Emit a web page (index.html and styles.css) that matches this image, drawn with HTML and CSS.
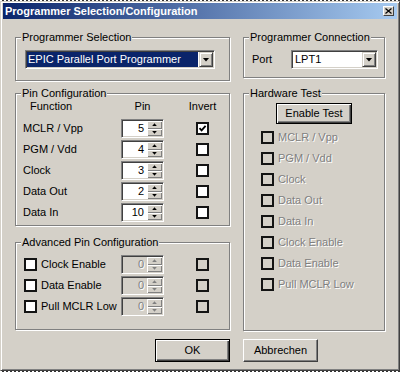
FILE: index.html
```html
<!DOCTYPE html>
<html lang="en">
<head>
    <meta charset="UTF-8">
    <title>Programmer Selection/Configuration</title>
    <link rel="stylesheet" href="styles.css">
</head>
<body>
    <div class="dialog">
        <div class="titlebar">
            <span class="title">Programmer Selection/Configuration</span>
            <span class="close">
                <svg width="7" height="6" viewBox="0 0 7 6"><path d="M0.5 0.5 L6.5 5.5 M6.5 0.5 L0.5 5.5" stroke="#000" stroke-width="1.2"/></svg>
            </span>
        </div>
        <div class="body">
            <div class="col">
                <fieldset class="group g-select">
                    <legend>Programmer Selection</legend>
                    <div class="inner select-inner">
                        <div class="combo combo-prog">
                            <span class="combo-text selected">EPIC Parallel Port Programmer</span>
                            <span class="drop"><i class="down"></i></span>
                        </div>
                    </div>
                </fieldset>
                <fieldset class="group g-pins">
                    <legend>Pin Configuration</legend>
                    <div class="pin-grid">
                        <span class="hd hd-func">Function</span>
                        <span class="hd hd-pin">Pin</span>
                        <span></span>
                        <span class="hd hd-inv">Invert</span>

                        <span>MCLR / Vpp</span>
                        <div class="spin"><span class="val">5</span><span class="ud"><b><i class="up"></i></b><b><i class="dn"></i></b></span></div>
                        <span></span>
                        <span class="chk checked"><svg width="9" height="9" viewBox="0 0 9 9"><path d="M1.5 4.2 L3.6 6.4 L7.6 1.8" stroke="#000" stroke-width="1.8" fill="none"/></svg></span>

                        <span>PGM / Vdd</span>
                        <div class="spin"><span class="val">4</span><span class="ud"><b><i class="up"></i></b><b><i class="dn"></i></b></span></div>
                        <span></span>
                        <span class="chk"></span>

                        <span>Clock</span>
                        <div class="spin"><span class="val">3</span><span class="ud"><b><i class="up"></i></b><b><i class="dn"></i></b></span></div>
                        <span></span>
                        <span class="chk"></span>

                        <span>Data Out</span>
                        <div class="spin"><span class="val">2</span><span class="ud"><b><i class="up"></i></b><b><i class="dn"></i></b></span></div>
                        <span></span>
                        <span class="chk"></span>

                        <span>Data In</span>
                        <div class="spin"><span class="val">10</span><span class="ud"><b><i class="up"></i></b><b><i class="dn"></i></b></span></div>
                        <span></span>
                        <span class="chk"></span>
                    </div>
                </fieldset>
                <fieldset class="group g-adv">
                    <legend>Advanced Pin Configuration</legend>
                    <div class="adv-grid">
                        <label class="opt"><span class="chk"></span>Clock Enable</label>
                        <div class="spin off"><span class="val">0</span><span class="ud"><b><i class="up"></i></b><b><i class="dn"></i></b></span></div>
                        <span></span>
                        <span class="chk off"></span>

                        <label class="opt"><span class="chk"></span>Data Enable</label>
                        <div class="spin off"><span class="val">0</span><span class="ud"><b><i class="up"></i></b><b><i class="dn"></i></b></span></div>
                        <span></span>
                        <span class="chk off"></span>

                        <label class="opt"><span class="chk"></span>Pull MCLR Low</label>
                        <div class="spin off"><span class="val">0</span><span class="ud"><b><i class="up"></i></b><b><i class="dn"></i></b></span></div>
                        <span></span>
                        <span class="chk off"></span>
                    </div>
                </fieldset>
            </div>
            <div class="col">
                <fieldset class="group g-conn">
                    <legend>Programmer Connection</legend>
                    <div class="inner port-row">
                        <span class="port-label">Port</span>
                        <div class="combo combo-port">
                            <span class="combo-text">LPT1</span>
                            <span class="drop"><i class="down"></i></span>
                        </div>
                    </div>
                </fieldset>
                <fieldset class="group g-test">
                    <legend>Hardware Test</legend>
                    <button class="btn default test-btn">Enable Test</button>
                    <div class="test-list">
                        <label class="opt dis"><span class="chk off"></span>MCLR / Vpp</label>
                        <label class="opt dis"><span class="chk off"></span>PGM / Vdd</label>
                        <label class="opt dis"><span class="chk off"></span>Clock</label>
                        <label class="opt dis"><span class="chk off"></span>Data Out</label>
                        <label class="opt dis"><span class="chk off"></span>Data In</label>
                        <label class="opt dis"><span class="chk off"></span>Clock Enable</label>
                        <label class="opt dis"><span class="chk off"></span>Data Enable</label>
                        <label class="opt dis"><span class="chk off"></span>Pull MCLR Low</label>
                    </div>
                </fieldset>
            </div>
            <button class="btn default ok">OK</button>
            <button class="btn cancel">Abbrechen</button>
        </div>
    </div>
</body>
</html>
```

FILE: styles.css
```css
body{
    margin: 0;
    padding-top: 1px;
    height: 371px;
    background: repeating-linear-gradient(90deg, #fff 0 2px, #333 2px 4px);
    font: 11px "Liberation Sans", Arial, sans-serif;
    line-height: 13px;
    color: #000;
}
.dialog{
    width: 400px;
    height: 370px;
    box-sizing: border-box;
    padding: 1px 2px 2px;
    background-color: #d4d0c8;
    border: 1px solid;
    border-color: #d4d0c8 #404040 #404040 #d4d0c8;
    box-shadow: inset 1px 1px #fff, inset -1px -1px #808080;
}
.titlebar{
    display: flex;
    align-items: center;
    height: 16px;
    padding: 0 3px 0 2px;
    background: linear-gradient(90deg, #0a246a, #a6caf0);
}
.title{
    flex: 1;
    color: #fff;
    font-weight: bold;
}
.close{
    display: flex;
    align-items: center;
    justify-content: center;
    width: 11px;
    height: 10px;
    box-sizing: border-box;
    background-color: #d4d0c8;
    border: 1px solid;
    border-color: #fff #404040 #404040 #fff;
}
.body{
    display: grid;
    grid-template-columns: 215px 142px;
    column-gap: 13px;
    padding: 12px 12px 0;
}
.col{
    display: flex;
    flex-direction: column;
}

/* etched group boxes */
.group{
    margin: 0;
    padding: 0;
    min-width: 0;
    box-sizing: border-box;
    border: 1px solid #808080;
    box-shadow: 1px 1px 0 #fff, inset 1px 1px 0 #fff;
}
.group legend{
    margin-left: 5px;
    padding: 0 1px;
    background-color: #d4d0c8;
}
.g-select{
    height: 50px;
    margin-bottom: 6px;
}
.g-pins{
    height: 139px;
    margin-bottom: 10px;
}
.g-adv{
    height: 94px;
}
.g-conn{
    height: 47px;
    margin-bottom: 9px;
}
.g-test{
    height: 244px;
}
.select-inner{
    padding: 6px 0 0 9px;
}
.port-row{
    display: flex;
    align-items: center;
    padding: 6px 0 0 8px;
}
.port-label{
    width: 39px;
}

/* combo boxes */
.combo{
    display: flex;
    height: 19px;
    box-sizing: border-box;
    background-color: #fff;
    border: 1px solid;
    border-color: #808080 #fff #fff #808080;
    box-shadow: inset 1px 1px #404040, inset -1px -1px #d4d0c8;
    padding: 1px;
}
.combo-prog{
    width: 190px;
}
.combo-port{
    width: 87px;
}
.combo-text{
    flex: 1;
    padding-left: 2px;
    line-height: 15px;
}
.combo-text.selected{
    background-color: #0a246a;
    color: #fff;
    padding-left: 1px;
    margin-right: 1px;
}
.drop{
    display: flex;
    align-items: center;
    justify-content: center;
    width: 14px;
    box-sizing: border-box;
    background-color: #d4d0c8;
    border: 1px solid;
    border-color: #d4d0c8 #404040 #404040 #d4d0c8;
    box-shadow: inset 1px 1px #fff, inset -1px -1px #808080;
}
.down{
    width: 7px;
    height: 4px;
    background-color: #000;
    clip-path: polygon(0 0, 100% 0, 50% 100%);
}

/* pin grid */
.pin-grid, .adv-grid{
    display: grid;
    grid-template-columns: 98px 43px 32px 13px;
    align-items: center;
    padding-left: 7px;
}
.pin-grid{
    grid-template-rows: 18px repeat(5, 21px);
}
.adv-grid{
    grid-auto-rows: 21px;
    padding-top: 5px;
}
.hd{
    align-self: start;
}
.hd-func{
    padding-left: 7px;
}
.hd-pin, .hd-inv{
    justify-self: center;
}

/* spin edits */
.spin{
    display: flex;
    height: 19px;
    box-sizing: border-box;
    background-color: #fff;
    border: 1px solid;
    border-color: #808080 #fff #fff #808080;
    box-shadow: inset 1px 1px #404040, inset -1px -1px #d4d0c8;
    padding: 1px;
}
.spin .val{
    flex: 1;
    text-align: right;
    padding-right: 3px;
    line-height: 15px;
}
.ud{
    display: flex;
    flex-direction: column;
    width: 15px;
}
.ud b{
    flex: 1;
    display: flex;
    align-items: center;
    justify-content: center;
    background-color: #d4d0c8;
    box-shadow: inset 1px 1px #fff, inset -1px -1px #808080;
}
.up, .dn{
    width: 5px;
    height: 3px;
    background-color: #000;
}
.up{
    clip-path: polygon(50% 0, 100% 100%, 0 100%);
}
.dn{
    clip-path: polygon(0 0, 100% 0, 50% 100%);
}
.spin.off{
    background-color: #d4d0c8;
}
.spin.off .val{
    color: #808080;
    text-shadow: 1px 1px 0 #fff;
}
.spin.off .up, .spin.off .dn{
    background-color: #808080;
}

/* check boxes */
.chk{
    display: flex;
    align-items: center;
    justify-content: center;
    width: 13px;
    height: 13px;
    box-sizing: border-box;
    background-color: #fff;
    border: 2px solid #141414;
}
.chk.off{
    background-color: #d4d0c8;
}
.opt{
    display: flex;
    align-items: center;
    gap: 4px;
}
.adv-grid .opt{
    margin-left: 1px;
}
.dis{
    color: #808080;
    text-shadow: 1px 1px 0 #fff;
}
.test-list{
    display: grid;
    grid-auto-rows: 21px;
    align-items: center;
    padding-left: 17px;
}

/* push buttons */
.btn{
    width: 75px;
    height: 23px;
    padding: 0;
    font: inherit;
    color: #000;
    background-color: #d4d0c8;
    border: 1px solid;
    border-color: #fff #404040 #404040 #fff;
    box-shadow: inset -1px -1px #808080;
}
.btn.default{
    border: 1px solid #000;
    box-shadow: inset 1px 1px #fff, inset -1px -1px #404040, inset -2px -2px #808080;
}
.test-btn{
    display: block;
    width: 76px;
    height: 21px;
    margin: 3px auto 3px;
}
.ok{
    justify-self: end;
    margin-top: 8px;
}
.cancel{
    justify-self: start;
    margin-top: 8px;
}
```
